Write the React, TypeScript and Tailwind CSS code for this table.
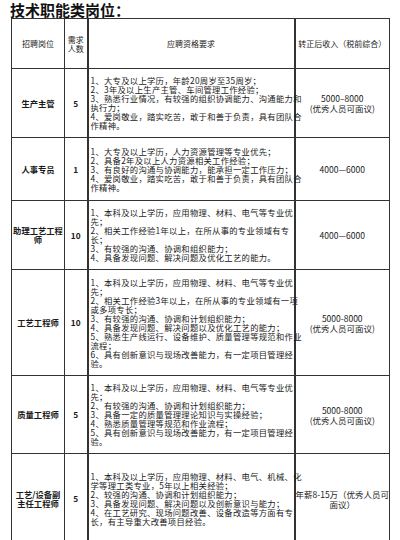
type Row = {
  title: string[];
  count: string;
  reqs: string[];
  pay: string[];
  h: string;
};

const rows: Row[] = [
  {
    title: ['生产主管'],
    count: '5',
    reqs: [
      '1、大专及以上学历，年龄20周岁至35周岁；',
      '2、3年及以上生产主管、车间管理工作经验；',
      '3、熟悉行业情况，有较强的组织协调能力、沟通能力和',
      '执行力；',
      '4、爱岗敬业，踏实吃苦，敢于和善于负责，具有团队合',
      '作精神。',
    ],
    pay: ['5000–8000', '(优秀人员可面议)'],
    h: 'h-[69px]',
  },
  {
    title: ['人事专员'],
    count: '1',
    reqs: [
      '1、大专及以上学历，人力资源管理等专业优先；',
      '2、具备2年及以上人力资源相关工作经验；',
      '3、有良好的沟通与协调能力，能承担一定工作压力；',
      '4、爱岗敬业，踏实吃苦，敢于和善于负责，具有团队合',
      '作精神。',
    ],
    pay: ['4000—6000'],
    h: 'h-[63px]',
  },
  {
    title: ['助理工艺工程', '师'],
    count: '10',
    reqs: [
      '1、本科及以上学历，应用物理、材料、电气等专业优',
      '先；',
      '2、相关工作经验1年以上，在所从事的专业领域有专',
      '长；',
      '3、有较强的沟通、协调和组织能力；',
      '4、具备发现问题、解决问题及优化工艺的能力。',
    ],
    pay: ['4000—6000'],
    h: 'h-[69px]',
  },
  {
    title: ['工艺工程师'],
    count: '10',
    reqs: [
      '1、本科及以上学历，应用物理、材料、电气等专业优',
      '先；',
      '2、相关工作经验3年以上，在所从事的专业领域有一项',
      '或多项专长；',
      '3、有较强的沟通、协调和计划组织能力；',
      '4、具备发现问题、解决问题以及优化工艺的能力；',
      '5、熟悉生产线运行、设备维护、质量管理等规范和作业',
      '流程；',
      '6、具有创新意识与现场改善能力，有一定项目管理经',
      '验。',
    ],
    pay: ['5000-8000', '(优秀人员可面议)'],
    h: 'h-[106px]',
  },
  {
    title: ['质量工程师'],
    count: '5',
    reqs: [
      '1、本科及以上学历，应用物理、材料、电气等专业优',
      '先；',
      '2、有较强的沟通、协调和计划组织能力；',
      '3、具备一定的质量管理理论知识与实操经验；',
      '4、熟悉质量管理等规范和作业流程；',
      '5、具有创新意识与现场改善能力，有一定项目管理经',
      '验。',
    ],
    pay: ['5000-8000', '(优秀人员可面议)'],
    h: 'h-[78px]',
  },
  {
    title: ['工艺/设备副', '主任工程师'],
    count: '5',
    reqs: [
      '1、本科及以上学历，应用物理、材料、电气、机械、化',
      '学等理工类专业，5年以上相关经验；',
      '2、较强的沟通、协调和计划组织能力；',
      '3、具备发现问题、解决问题以及创新意识与能力；',
      '4、在工艺研究、现场问题改善、设备改造等方面有专',
      '长，有主导重大改善项目经验。',
    ],
    pay: ['年薪8-15万（优秀人员可', '面议）'],
    h: 'h-[90px]',
  },
];

export default function App() {
  return (
    <div className="w-[400px] h-[540px] overflow-hidden bg-white font-['Noto_Sans_CJK_SC','Noto_Sans',sans-serif] text-[#1a1a1a]">
      <h1 className="pl-[10px] pt-[1px] text-[15px] leading-[17px] font-bold text-[#111]">技术职能类岗位：</h1>

      <table className="ml-[11px] w-[378px] table-fixed border border-[#333] text-[8.3px] leading-[9px]">
        <colgroup>
          <col className="w-[53px]" />
          <col className="w-[23px]" />
          <col className="w-[207px]" />
          <col className="w-[95px]" />
        </colgroup>
        <thead>
          <tr className="h-[50px] text-[8px]">
            <th className="border border-[#333] font-normal text-center">招聘岗位</th>
            <th className="border border-[#333] border-r-2 font-normal text-center">
              需求
              <br />
              人数
            </th>
            <th className="border border-[#333] border-r-2 font-normal text-center">应聘资格要求</th>
            <th className="border border-[#333] font-normal text-center">转正后收入（税前综合）</th>
          </tr>
        </thead>
        <tbody>
          {rows.map((row) => (
            <tr key={row.title.join('')} className={row.h}>
              <td className="border border-[#333] text-center font-bold">
                {row.title.map((t) => (
                  <div key={t}>{t}</div>
                ))}
              </td>
              <td className="border border-[#333] border-r-2 text-center font-bold">{row.count}</td>
              <td className="border border-[#333] border-r-2 pl-[2px] align-middle tracking-[0.3px]">
                {row.reqs.map((line, i) => (
                  <div key={i} className="whitespace-nowrap">
                    {line}
                  </div>
                ))}
              </td>
              <td className="border border-[#333] text-center leading-[10px] text-[8.5px]">
                {row.pay.map((p) => (
                  <div key={p} className="whitespace-nowrap">
                    {p}
                  </div>
                ))}
              </td>
            </tr>
          ))}
        </tbody>
      </table>
    </div>
  );
}
